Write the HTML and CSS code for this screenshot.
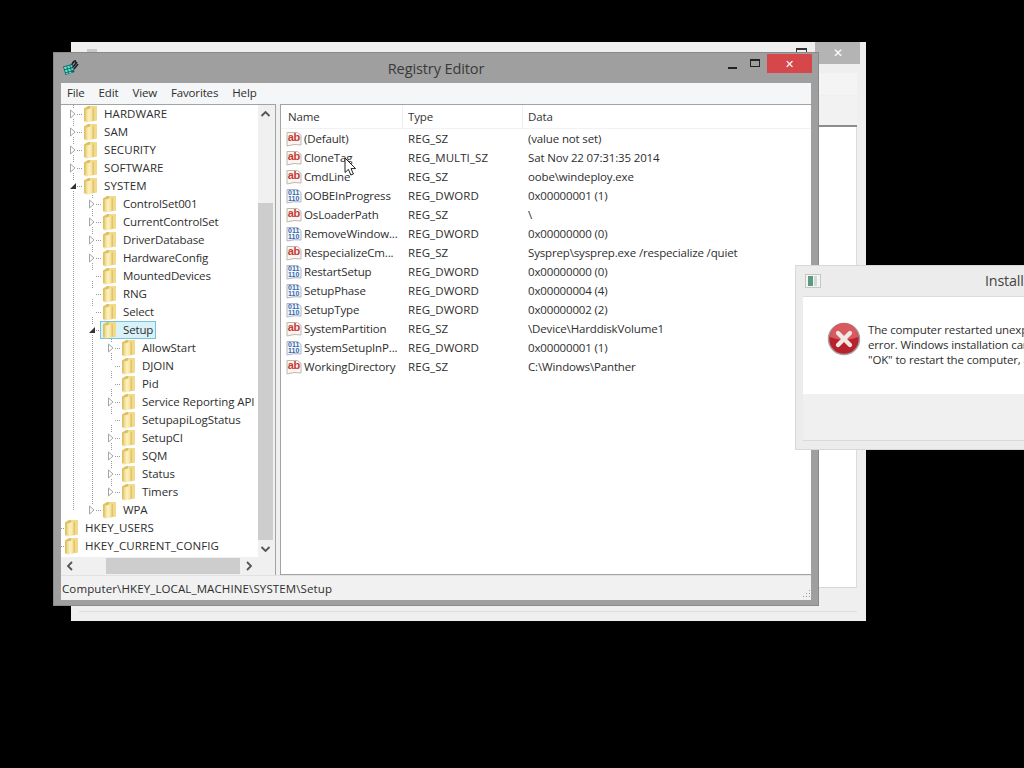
FILE: index.html
```html
<!DOCTYPE html>
<html lang="en">
<head>
<meta charset="utf-8">
<title>Registry Editor</title>
<link rel="stylesheet" href="styles.css">
</head>
<body>
<svg class="defs" width="0" height="0" aria-hidden="true">
  <defs>
    <linearGradient id="fold" x1="0" y1="0" x2="1" y2="0">
      <stop offset="0" stop-color="#ecd382"/><stop offset=".5" stop-color="#fcf2c2"/><stop offset="1" stop-color="#f4df95"/>
    </linearGradient>
    <symbol id="folder" viewBox="0 0 15 18">
      <path d="M1 3.5 L5 1 H13.5 V15.5 H6 L1 16.5Z" fill="#dfc063"/>
      <path d="M7 1 H14 V15.5 H7Z" fill="#f1da8c"/>
      <path d="M2.5 4.5 Q6 4.5 9.5 2.5 V16.5 L2.5 17.5Z" fill="url(#fold)"/>
      <path d="M9.5 2.5 L11 3.5 V15.5 L9.5 16.5Z" fill="#e3c46a"/>
    </symbol>
    <symbol id="ab" viewBox="0 0 16 16">
      <path d="M1 1.5 H11.5 L15 4.5 V14 Q8 12.5 1 15Z" fill="#fbf6f1" stroke="#bfb6ad"/>
      <text x="1.7" y="10" class="ab-text">ab</text>
    </symbol>
    <symbol id="bin" viewBox="0 0 16 16">
      <path d="M1 1.5 H11.5 L15 4.5 V14 Q8 13 1 15Z" fill="#f7f9fc" stroke="#aeb5c0"/>
      <text x="2" y="7" class="bin-text">011</text>
      <text x="2" y="13" class="bin-text">110</text>
    </symbol>
    <symbol id="open" viewBox="0 0 8 10"><path d="M1.5 1 L6 5 L1.5 9Z" fill="#fff" stroke="#a6a6a6"/></symbol>
    <symbol id="shut" viewBox="0 0 8 10"><path d="M7 2 V8 H1Z" fill="#333"/></symbol>
  </defs>
</svg>

<div class="back">
  <span class="back-peek"></span>
  <span class="back-max"></span>
  <span class="back-close">✕</span>
  <div class="back-a"></div>
  <div class="back-b"></div>
  <div class="back-c"></div>
  <div class="back-d"></div>
</div>

<section class="reg">
  <header class="reg-title">
    <svg class="reg-icon" width="17" height="17" viewBox="0 0 17 17">
      <path d="M9 7 L12 2 M11 8 L15 3 M12 10 L16 5 M13 1 L13.5 4" stroke="#14202a" stroke-width="1.5" fill="none"/>
      <path d="M1 7.5 L10 5 L12.5 13 L3.5 16Z" fill="#145f5c"/>
      <g fill="#5fe3d2">
        <path d="M2 8 L4.4 7.4 L5 9.6 L2.6 10.2Z"/><path d="M5.2 7.2 L7.4 6.6 L8 8.8 L5.8 9.4Z"/><path d="M8.2 6.4 L9.6 6 L10.2 8.1 L8.8 8.5Z"/>
        <path d="M2.9 11 L5.3 10.4 L5.9 12.6 L3.5 13.2Z"/><path d="M6.1 10.2 L8.3 9.6 L8.9 11.8 L6.7 12.4Z"/><path d="M9.1 9.4 L10.5 9 L11.1 11.1 L9.7 11.5Z"/>
        <path d="M3.8 14 L6.2 13.4 L6.5 14.6 L4.1 15.3Z"/><path d="M7 13.2 L9.2 12.6 L9.5 13.8 L7.3 14.4Z"/>
      </g>
    </svg>
    <h1 class="reg-name">Registry Editor</h1>
    <span class="tb-min"></span>
    <span class="tb-max"></span>
    <span class="tb-close">✕</span>
  </header>
  <div class="client">
    <nav class="menu">
      <span>File</span><span>Edit</span><span>View</span><span>Favorites</span><span>Help</span>
    </nav>
    <div class="panes">
      <div class="tree-pane">
        <div class="tree">
          <ul class="kids k1">
            <li><div class="row"><svg class="exp"><use href="#open"/></svg><span class="node"><svg class="fd"><use href="#folder"/></svg><span>HARDWARE</span></span></div></li>
            <li><div class="row"><svg class="exp"><use href="#open"/></svg><span class="node"><svg class="fd"><use href="#folder"/></svg><span>SAM</span></span></div></li>
            <li><div class="row"><svg class="exp"><use href="#open"/></svg><span class="node"><svg class="fd"><use href="#folder"/></svg><span>SECURITY</span></span></div></li>
            <li><div class="row"><svg class="exp"><use href="#open"/></svg><span class="node"><svg class="fd"><use href="#folder"/></svg><span>SOFTWARE</span></span></div></li>
            <li><div class="row"><svg class="exp"><use href="#shut"/></svg><span class="node"><svg class="fd"><use href="#folder"/></svg><span>SYSTEM</span></span></div>
              <ul class="kids k2">
                <li><div class="row"><svg class="exp"><use href="#open"/></svg><span class="node"><svg class="fd"><use href="#folder"/></svg><span>ControlSet001</span></span></div></li>
                <li><div class="row"><svg class="exp"><use href="#open"/></svg><span class="node"><svg class="fd"><use href="#folder"/></svg><span>CurrentControlSet</span></span></div></li>
                <li><div class="row"><svg class="exp"><use href="#open"/></svg><span class="node"><svg class="fd"><use href="#folder"/></svg><span>DriverDatabase</span></span></div></li>
                <li><div class="row"><svg class="exp"><use href="#open"/></svg><span class="node"><svg class="fd"><use href="#folder"/></svg><span>HardwareConfig</span></span></div></li>
                <li><div class="row"><span class="exp"></span><span class="node"><svg class="fd"><use href="#folder"/></svg><span>MountedDevices</span></span></div></li>
                <li><div class="row"><span class="exp"></span><span class="node"><svg class="fd"><use href="#folder"/></svg><span>RNG</span></span></div></li>
                <li><div class="row"><span class="exp"></span><span class="node"><svg class="fd"><use href="#folder"/></svg><span>Select</span></span></div></li>
                <li><div class="row"><svg class="exp"><use href="#shut"/></svg><span class="node sel"><svg class="fd"><use href="#folder"/></svg><span>Setup</span></span></div>
                  <ul class="kids k3">
                    <li><div class="row"><svg class="exp"><use href="#open"/></svg><span class="node"><svg class="fd"><use href="#folder"/></svg><span>AllowStart</span></span></div></li>
                    <li><div class="row"><span class="exp"></span><span class="node"><svg class="fd"><use href="#folder"/></svg><span>DJOIN</span></span></div></li>
                    <li><div class="row"><span class="exp"></span><span class="node"><svg class="fd"><use href="#folder"/></svg><span>Pid</span></span></div></li>
                    <li><div class="row"><svg class="exp"><use href="#open"/></svg><span class="node"><svg class="fd"><use href="#folder"/></svg><span>Service Reporting API</span></span></div></li>
                    <li><div class="row"><span class="exp"></span><span class="node"><svg class="fd"><use href="#folder"/></svg><span>SetupapiLogStatus</span></span></div></li>
                    <li><div class="row"><svg class="exp"><use href="#open"/></svg><span class="node"><svg class="fd"><use href="#folder"/></svg><span>SetupCI</span></span></div></li>
                    <li><div class="row"><svg class="exp"><use href="#open"/></svg><span class="node"><svg class="fd"><use href="#folder"/></svg><span>SQM</span></span></div></li>
                    <li><div class="row"><svg class="exp"><use href="#open"/></svg><span class="node"><svg class="fd"><use href="#folder"/></svg><span>Status</span></span></div></li>
                    <li><div class="row"><svg class="exp"><use href="#open"/></svg><span class="node"><svg class="fd"><use href="#folder"/></svg><span>Timers</span></span></div></li>
                  </ul>
                </li>
                <li><div class="row"><svg class="exp"><use href="#open"/></svg><span class="node"><svg class="fd"><use href="#folder"/></svg><span>WPA</span></span></div></li>
              </ul>
            </li>
          </ul>
          <div class="row root"><span class="node"><svg class="fd"><use href="#folder"/></svg><span>HKEY_USERS</span></span></div>
          <div class="row root"><span class="node"><svg class="fd"><use href="#folder"/></svg><span>HKEY_CURRENT_CONFIG</span></span></div>
        </div>
        <div class="vbar">
          <svg class="arr" viewBox="0 0 10 8"><path d="M1 6 L5 2 L9 6" /></svg>
          <div class="vtrack"><div class="vthumb"></div></div>
          <svg class="arr" viewBox="0 0 10 8"><path d="M1 2 L5 6 L9 2" /></svg>
        </div>
        <div class="hbar">
          <svg class="arr" viewBox="0 0 8 10"><path d="M6 1 L2 5 L6 9" /></svg>
          <div class="htrack"><div class="hthumb"></div></div>
          <svg class="arr" viewBox="0 0 8 10"><path d="M2 1 L6 5 L2 9" /></svg>
        </div>
        <div class="corner"></div>
      </div>
      <div class="list-pane">
        <div class="list-head"><span>Name</span><span>Type</span><span>Data</span></div>
        <div class="lrow"><span class="nm"><svg class="ic"><use href="#ab"/></svg>(Default)</span><span>REG_SZ</span><span>(value not set)</span></div>
        <div class="lrow"><span class="nm"><svg class="ic"><use href="#ab"/></svg>CloneTag</span><span>REG_MULTI_SZ</span><span>Sat Nov 22 07:31:35 2014</span></div>
        <div class="lrow"><span class="nm"><svg class="ic"><use href="#ab"/></svg>CmdLine</span><span>REG_SZ</span><span>oobe\windeploy.exe</span></div>
        <div class="lrow"><span class="nm"><svg class="ic"><use href="#bin"/></svg>OOBEInProgress</span><span>REG_DWORD</span><span>0x00000001 (1)</span></div>
        <div class="lrow"><span class="nm"><svg class="ic"><use href="#ab"/></svg>OsLoaderPath</span><span>REG_SZ</span><span>\</span></div>
        <div class="lrow"><span class="nm"><svg class="ic"><use href="#bin"/></svg>RemoveWindow...</span><span>REG_DWORD</span><span>0x00000000 (0)</span></div>
        <div class="lrow"><span class="nm"><svg class="ic"><use href="#ab"/></svg>RespecializeCm...</span><span>REG_SZ</span><span>Sysprep\sysprep.exe /respecialize /quiet</span></div>
        <div class="lrow"><span class="nm"><svg class="ic"><use href="#bin"/></svg>RestartSetup</span><span>REG_DWORD</span><span>0x00000000 (0)</span></div>
        <div class="lrow"><span class="nm"><svg class="ic"><use href="#bin"/></svg>SetupPhase</span><span>REG_DWORD</span><span>0x00000004 (4)</span></div>
        <div class="lrow"><span class="nm"><svg class="ic"><use href="#bin"/></svg>SetupType</span><span>REG_DWORD</span><span>0x00000002 (2)</span></div>
        <div class="lrow"><span class="nm"><svg class="ic"><use href="#ab"/></svg>SystemPartition</span><span>REG_SZ</span><span>\Device\HarddiskVolume1</span></div>
        <div class="lrow"><span class="nm"><svg class="ic"><use href="#bin"/></svg>SystemSetupInP...</span><span>REG_DWORD</span><span>0x00000001 (1)</span></div>
        <div class="lrow"><span class="nm"><svg class="ic"><use href="#ab"/></svg>WorkingDirectory</span><span>REG_SZ</span><span>C:\Windows\Panther</span></div>
      </div>
    </div>
    <footer class="status">
      <span>Computer\HKEY_LOCAL_MACHINE\SYSTEM\Setup</span>
      <svg class="grip" width="9" height="9" viewBox="0 0 9 9"><path d="M7 1h1v1H7zM4 4h1v1H4zM7 4h1v1H7zM1 7h1v1H1zM4 7h1v1H4zM7 7h1v1H7z" fill="#9c9c9c"/></svg>
    </footer>
  </div>
</section>

<section class="dialog">
  <header class="dlg-title">
    <svg class="dlg-icon" width="17" height="14" viewBox="0 0 17 14"><rect x=".5" y=".5" width="15" height="13" fill="#f4f4f4" stroke="#c3c8c6"/><rect x="3" y="2" width="5" height="10" fill="#5c9a82"/><rect x="9" y="2" width="3" height="10" fill="#cfdcd6"/></svg>
    <span class="dlg-name">Install Windows</span>
  </header>
  <div class="dlg-body">
    <svg class="err" width="34" height="34" viewBox="0 0 34 34">
      <circle cx="17" cy="17" r="15.5" fill="#b8222c" stroke="#a8a0a0" stroke-width="1.5"/>
      <path d="M3 15 A14 14 0 0 1 31 15 Q17 21 3 15Z" fill="#d65a5f"/>
      <path d="M11 11 L23 23 M23 11 L11 23" stroke="#f4e8e4" stroke-width="4.4" stroke-linecap="round"/>
    </svg>
    <p class="dlg-msg">The computer restarted unexpectedly or encountered an unexpected<br>error. Windows installation cannot proceed. To install Windows, click<br>"OK" to restart the computer, and then restart the installation.</p>
  </div>
  <div class="dlg-foot"></div>
</section>

<svg class="cursor" width="13" height="20" viewBox="0 0 13 20"><path d="M1 1 V15.5 L4.4 12.4 L6.8 18 L9.4 17 L7 11.6 H11.6Z" fill="#fff" stroke="#222" stroke-width="1"/></svg>
</body>
</html>
```
FILE: styles.css
```css
* { box-sizing: border-box; }
html, body { margin: 0; height: 100%; }
body {
  background: #000;
  overflow: hidden;
  position: relative;
  width: 1024px;
  height: 768px;
  font: 11.5px/18px "Open Sans", "Noto Sans", sans-serif;
  letter-spacing: -.15px;
  color: #2e2e2e;
}
.defs { position: absolute; }
.ab-text { font: bold 11px "Liberation Sans", sans-serif; fill: #c63d36; letter-spacing: -.3px; }
.bin-text { font: bold 7px "Liberation Sans", sans-serif; fill: #3468ae; letter-spacing: 0; }

/* window behind */
.back {
  position: absolute;
  left: 71px; top: 42px;
  width: 795px; height: 579px;
  background: #efefef;
  padding: 31px 9px 9px 8px;
  display: flex;
  flex-direction: column;
}
.back-peek { position: absolute; left: 16px; top: 7px; width: 10px; height: 4px; background: #c9c9c9; }
.back-max { position: absolute; left: 725px; top: 6px; width: 11px; height: 5px; border: 1px solid #333; border-top-width: 2px; }
.back-close {
  position: absolute; left: 744px; top: 0;
  width: 45px; height: 22px;
  background: #b4b4b4; color: #fff;
  font-size: 12px; line-height: 22px; text-align: center;
}
.back-a { height: 22px; background: #f4f4f4; margin-bottom: 1px; }
.back-b { height: 31px; background: #f2f2f2; border-bottom: 2px solid #8c8c8c; }
.back-c { flex: 1; background: #fff; border-right: 1px solid #dcdcdc; border-bottom: 1px solid #d6d6d6; }
.back-d { height: 24px; background: #efefef; border-bottom: 1px solid #dedede; }

/* registry editor */
.reg {
  position: absolute;
  left: 53px; top: 52px;
  width: 766px; height: 554px;
  background: #9f9f9f;
  border: 1px solid #8a8a8a;
  padding: 0 7px 5px 7px;
  display: flex;
  flex-direction: column;
}
.reg-title { position: relative; height: 30px; flex: none; }
.reg-icon { position: absolute; left: 1px; top: 6px; }
.reg-name {
  margin: 0; font-weight: 400; font-size: 14.6px; line-height: 30px;
  text-align: center; color: #3a3a3a;
}
.tb-min { position: absolute; left: 667px; top: 14px; width: 9px; height: 2px; background: #222; }
.tb-max { position: absolute; left: 689px; top: 6px; width: 10px; height: 8px; border: 1px solid #222; border-top-width: 2px; }
.tb-close {
  position: absolute; left: 706px; top: 1px;
  width: 45px; height: 19px;
  background: #d5474b; color: #fff;
  font-size: 11px; line-height: 19px; text-align: center;
}
.client { flex: 1; display: flex; flex-direction: column; background: #f0f0f0; min-height: 0; }
.menu { height: 21px; flex: none; background: #f5f6f7; display: flex; padding-left: 6px; gap: 14px; line-height: 20px; }
.panes { flex: 1; display: flex; gap: 4px; min-height: 0; background: #f0f0f0; }
.status {
  height: 25px; flex: none; padding: 3px 0 0 1px; position: relative; background: #f1f1f1;
  border-top: 1px solid #e2e2e2; line-height: 20px; letter-spacing: .12px;
}
.grip { position: absolute; right: 0; bottom: 2px; }

/* tree */
.tree-pane {
  width: 215px; flex: none; background: #fff;
  border: 1px solid #a3a3a3; border-left: 0;
  display: grid;
  grid-template-columns: 197px 17px;
  grid-template-rows: 452px 18px;
}
.tree { overflow: hidden; white-space: nowrap; }
.kids { list-style: none; margin: 0; padding: 0; position: relative; }
.kids::before {
  content: ""; position: absolute; top: 0; bottom: 9px; width: 1px;
  background: repeating-linear-gradient(#9a9a9a 0 1px, transparent 1px 2px);
}
.k1 { padding-left: 7px; }
.k1::before { left: 12px; }
.k2, .k3 { margin-left: -7px; padding-left: 26px; }
.k2::before, .k3::before { left: 31px; }
.k1 > li > .row { letter-spacing: .08px; }
.k3 > li > .row { letter-spacing: -.07px; }
.row { height: 18px; display: flex; align-items: center; position: relative; }
.exp { width: 8px; height: 10px; flex: none; margin-left: 1px; margin-right: 6px; position: relative; background: #fff; }
.row::before {
  content: ""; position: absolute; left: 9px; top: 9px; width: 6px; height: 1px;
  background: repeating-linear-gradient(90deg, #9a9a9a 0 1px, transparent 1px 2px);
}
.root { padding-left: 3px; letter-spacing: .11px; }
.root::before { left: 0; width: 3px; }
.node { display: inline-flex; align-items: center; height: 18px; position: relative; padding-right: 3px; }
.fd { width: 15px; height: 18px; flex: none; margin-right: 6px; }
.sel {
  margin-left: -2px; padding-left: 2px; height: 18px;
  background: #d9f1f8; box-shadow: inset 0 0 0 1px #76c4d6;
}
.vbar { background: #f0f0f0; display: flex; flex-direction: column; padding-right: 2px; }
.hbar { background: #f0f0f0; display: flex; padding: 1px 0; }
.corner { background: #f0f0f0; }
.arr { flex: none; fill: none; stroke: #555; stroke-width: 1.8; }
.vbar .arr { width: 15px; height: 18px; padding: 5px 2px; }
.hbar .arr { width: 18px; height: 16px; padding: 3px 5px; }
.vtrack { flex: 1; padding-top: 80px; }
.vthumb { height: 337px; background: #cdcdcd; }
.htrack { flex: 1; padding-left: 27px; }
.hthumb { width: 134px; height: 16px; background: #cdcdcd; }

/* list */
.list-pane { flex: 1; background: #fff; border: 1px solid #a3a3a3; border-right: 0; min-width: 0; }
.list-head {
  height: 24px; display: grid; grid-template-columns: 120px 120px 1fr;
  padding-left: 7px; line-height: 23px; color: #333; border-bottom: 1px solid #f1f2f4;
}
.list-head span + span { border-left: 1px solid #eceef1; margin-left: -6px; padding-left: 5px; }
.lrow {
  height: 19px; display: grid; grid-template-columns: 122px 120px 1fr;
  padding-left: 5px; line-height: 19px; white-space: nowrap;
}
.lrow span:nth-child(2) { letter-spacing: .08px; }
.nm { display: flex; align-items: center; }
.ic { width: 16px; height: 16px; margin-right: 2px; flex: none; }

/* dialog */
.dialog {
  position: absolute;
  left: 795px; top: 265px;
  width: 420px; height: 185px;
  background: #ececec;
  border: 1px solid #d8d8d8;
  padding: 0 0 8px 7px;
  display: flex;
  flex-direction: column;
}
.dlg-title { height: 30px; flex: none; position: relative; }
.dlg-icon { position: absolute; left: 2px; top: 8px; }
.dlg-name { font-size: 14.3px; line-height: 30px; color: #444; position: absolute; left: 182px; white-space: nowrap; }
.dlg-body {
  height: 98px; flex: none; background: #fff; display: flex;
  padding: 25px 0 0 24px; border-top: 1px solid #dcdcdc;
}
.err { flex: none; margin-right: 6px; }
.dlg-msg { margin: 0; line-height: 15px; white-space: nowrap; padding-left: 1px; }
.dlg-foot { flex: 1; background: #f0f0f0; border-bottom: 1px solid #d9d9d9; }

.cursor { position: absolute; left: 344px; top: 157px; }
```
